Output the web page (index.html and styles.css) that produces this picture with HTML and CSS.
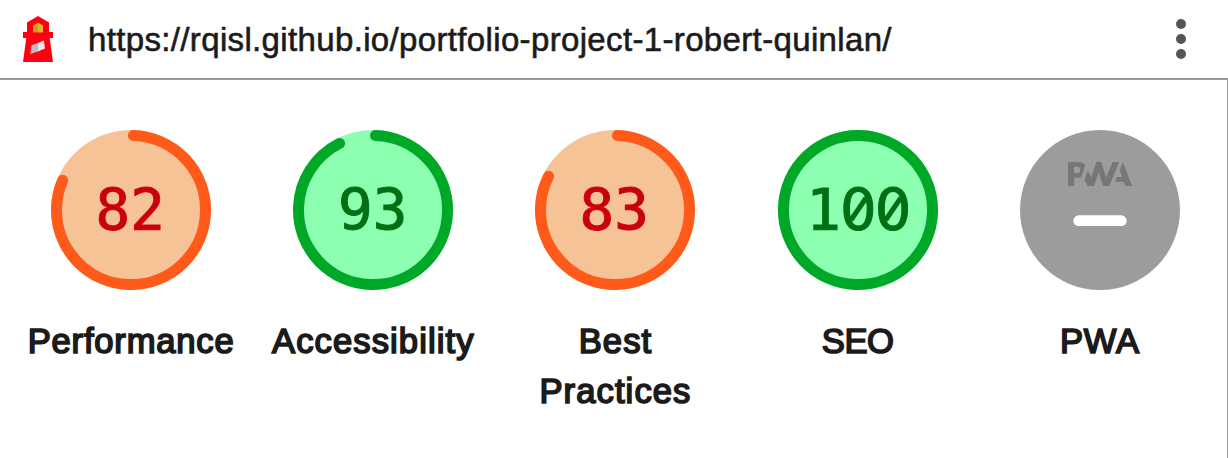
FILE: index.html
```html
<!DOCTYPE html>
<html lang="en">
<head>
<meta charset="utf-8">
<title>Lighthouse report</title>
<link rel="stylesheet" href="styles.css">
</head>
<body>
<header class="topbar">
  <svg class="logo" viewBox="0 0 30 46" aria-hidden="true">
    <path fill="#ff0012" d="M4 6.5 15 0l11 6.5V16h4v6h-3.300L30 46H0L3.300 22H0v-6h4z"/>
    <path fill="#c99a2c" d="M10 9.500 15 6.500V16.500h-5z"/>
    <path fill="#edb02e" d="M20 9.500 15 6.500V16.500h5z"/>
    <path fill="#bdbdbd" d="M8.500 29.300 15 26.900V35.500L7.300 38z"/>
    <path fill="#e8e8e8" d="M15 26.900 20.800 24.500 22 32.500 15 35.500z"/>
  </svg>
  <span class="url">https://rqisl.github.io/portfolio-project-1-robert-quinlan/</span>
  <svg class="menu" viewBox="0 0 10 40" aria-hidden="true">
    <circle cx="5" cy="5" r="5"/><circle cx="5" cy="20" r="5"/><circle cx="5" cy="35" r="5"/>
  </svg>
</header>
<main class="scores">
  <div class="score average">
    <svg class="gauge" viewBox="0 0 160 160">
      <circle class="base" cx="80" cy="80" r="80"/>
      <circle class="arc" cx="80" cy="80" r="74.5" pathLength="360" stroke-dasharray="291.700 360"/>
      <text class="value" x="79.300" y="100">82</text>
    </svg>
    <span class="label">Performance</span>
  </div>
  <div class="score pass">
    <svg class="gauge" viewBox="0 0 160 160">
      <circle class="base" cx="80" cy="80" r="80"/>
      <circle class="arc" cx="80" cy="80" r="74.5" pathLength="360" stroke-dasharray="331.400 360"/>
      <text class="value" x="79.800" y="100">93</text>
    </svg>
    <span class="label wide">Accessibility</span>
  </div>
  <div class="score average">
    <svg class="gauge" viewBox="0 0 160 160">
      <circle class="base" cx="80" cy="80" r="80"/>
      <circle class="arc" cx="80" cy="80" r="74.5" pathLength="360" stroke-dasharray="295.100 360"/>
      <text class="value" x="79.300" y="100">83</text>
    </svg>
    <span class="label wide">Best Practices</span>
  </div>
  <div class="score pass">
    <svg class="gauge" viewBox="0 0 160 160">
      <circle class="base" cx="80" cy="80" r="80"/>
      <circle class="arc" cx="80" cy="80" r="74.5"/>
      <text class="value" x="45.500 80.300 115" y="100">1<tspan class="zero">00</tspan></text>
      <path class="slash" d="M73 90 88 68M107.700 90 122.700 68"/>
    </svg>
    <span class="label tight">SEO</span>
  </div>
  <div class="score">
    <svg class="gauge" viewBox="0 0 60 60">
      <circle fill="#9c9c9c" cx="30" cy="30" r="30"/>
      <g fill="#777">
        <path d="M35.66 19.39l.7-1.75h2L37.4 15 38.6 12l3.4 9h-2.51l-.58-1.61z"/>
        <path d="M33.52 21l3.65-9h-2.42l-2.5 5.82L30.5 12h-1.86l-1.9 5.82-1.35-2.65-1.21 3.72L25.4 21h2.38l1.72-5.2 1.64 5.2z"/>
        <path fill-rule="evenodd" d="M20.3 17.91h1.48c.45 0 .85-.05 1.2-.15l.39-1.18 1.07-3.3a2.64 2.64 0 0 0-.28-.37c-.55-.6-1.36-.91-2.42-.91H18v9h2.3V17.91zm1.96-3.84c.22.22.33.5.33.87 0 .36-.1.65-.29.87-.2.23-.59.35-1.15.35h-.86v-2.41h.87c.52 0 .89.1 1.1.32z"/>
      </g>
      <rect fill="#fff" x="20" y="32" width="20" height="4" rx="2"/>
    </svg>
    <span class="label">PWA</span>
  </div>
</main>
</body>
</html>
```
FILE: styles.css
```css
* { box-sizing: border-box; }
body {
  margin: 0;
  height: 458px;
  display: flex;
  flex-direction: column;
  overflow: hidden;
  background: #fff;
  color: #1b1b1b;
  font-family: "Liberation Sans", Arial, sans-serif;
}
.topbar {
  height: 80px;
  flex: none;
  display: flex;
  align-items: center;
  padding: 0 42px 0 23px;
  border-bottom: 2px solid #999;
}
.logo { width: 30px; height: 46px; margin-right: 35px; flex: none; }
.url {
  flex: 1;
  font-size: 33px;
  line-height: 40px;
  padding-top: 2px;
  white-space: nowrap;
  letter-spacing: 0.35px;
  -webkit-text-stroke: 0.6px #1b1b1b;
}
.menu { width: 10px; height: 40px; fill: #555; flex: none; }
.scores {
  flex: 1;
  display: grid;
  grid-template-columns: repeat(5, 242.2px);
  padding: 50px 0 0 10px;
  border-right: 1px solid #999;
}
.score { display: flex; flex-direction: column; align-items: center; }
.gauge { width: 160px; height: 160px; display: block; }
.label {
  margin-top: 26px;
  width: 210px;
  text-align: center;
  font-size: 34.6px;
  line-height: 50px;
  letter-spacing: 0.8px;
  -webkit-text-stroke: 1.7px #1b1b1b;
}
.wide { letter-spacing: 1.1px; }
.tight { letter-spacing: -0.4px; }
.average { --base: #f6c397; --arc: #ff5a19; --value: #cb000e; }
.pass { --base: #8dffb0; --arc: #00a827; --value: #006f14; }
.base { fill: var(--base); }
.arc {
  fill: none;
  stroke: var(--arc);
  stroke-width: 11;
  stroke-linecap: round;
  transform: rotate(-88.1deg);
  transform-origin: 80px 80px;
}
.value {
  fill: var(--value);
  stroke: var(--value);
  stroke-width: 1;
  font: 57.6px "DejaVu Sans Mono", monospace;
  text-anchor: middle;
}
.zero { font-family: "DejaVu Sans", sans-serif; }
.slash { fill: none; stroke: var(--value); stroke-width: 5; }
```
